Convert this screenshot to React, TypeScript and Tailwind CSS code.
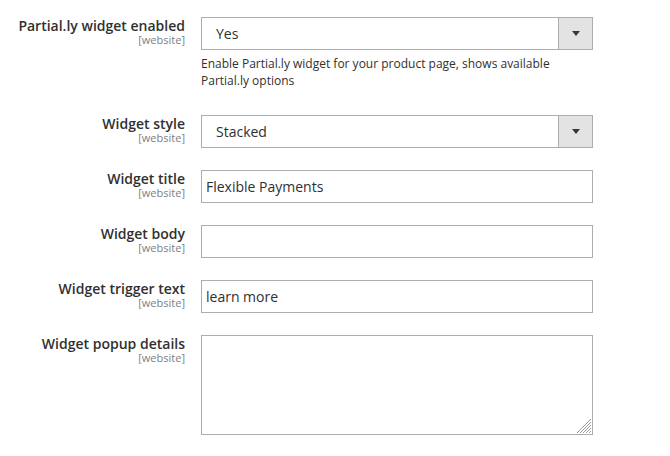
import React from "react";

const font = { fontFamily: '"Open Sans", "Liberation Sans", sans-serif' };

function Label({ text }: { text: string }) {
  return (
    <div className="w-[185px] shrink-0 text-right">
      <div className="text-[14px] font-semibold leading-[17px] text-[#303030]">{text}</div>
      <div className="text-[11px] leading-[12px] text-[#808080]">[website]</div>
    </div>
  );
}

function SelectBox({ value }: { value: string }) {
  return (
    <div className="flex h-[33px] w-[392px] border border-[#adadad] bg-white">
      <div className="flex flex-1 items-center pl-[14px] text-[14px] text-[#303030]">{value}</div>
      <div className="flex w-[34px] items-center justify-center border-l border-[#adadad] bg-[#e3e3e3]">
        <svg width="8" height="5" viewBox="0 0 8 5">
          <path d="M0 0 H8 L4 5 Z" fill="#41362f" />
        </svg>
      </div>
    </div>
  );
}

function TextBox({ value }: { value: string }) {
  return (
    <div className="flex h-[33px] w-[392px] items-center border border-[#adadad] bg-white pl-[4px] text-[14px] text-[#303030]">
      {value}
    </div>
  );
}

function Row({ label, children, className }: { label: string; children: React.ReactNode; className?: string }) {
  return (
    <div className={`flex gap-4 ${className ?? "mb-[22px]"}`}>
      <Label text={label} />
      <div className="w-[392px]">{children}</div>
    </div>
  );
}

export default function App() {
  return (
    <div className="h-[456px] w-[670px] bg-white pt-[17px]" style={font}>
      <Row label="Partial.ly widget enabled" className="mb-[26px]">
        <SelectBox value="Yes" />
        <p className="mt-[5px] text-[12px] leading-[17px] text-[#303030]">
          Enable Partial.ly widget for your product page, shows available Partial.ly options
        </p>
      </Row>
      <Row label="Widget style">
        <SelectBox value="Stacked" />
      </Row>
      <Row label="Widget title">
        <TextBox value="Flexible Payments" />
      </Row>
      <Row label="Widget body">
        <TextBox value="" />
      </Row>
      <Row label="Widget trigger text">
        <TextBox value="learn more" />
      </Row>
      <Row label="Widget popup details">
        <div className="relative h-[100px] w-[392px] border border-[#adadad] bg-white">
          <svg className="absolute bottom-[1px] right-[1px]" width="14" height="14" viewBox="0 0 14 14">
            <g stroke="#9a9a9a" strokeWidth="1">
              <line x1="14" y1="0" x2="0" y2="14" />
              <line x1="14" y1="3" x2="3" y2="14" />
              <line x1="14" y1="6" x2="6" y2="14" />
              <line x1="14" y1="9" x2="9" y2="14" />
              <line x1="14" y1="12" x2="12" y2="14" />
            </g>
          </svg>
        </div>
      </Row>
    </div>
  );
}
